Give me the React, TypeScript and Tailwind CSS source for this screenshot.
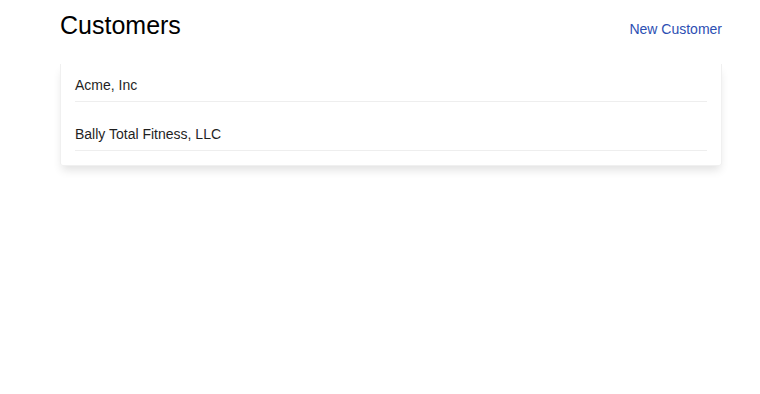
const customers = ['Acme, Inc', 'Bally Total Fitness, LLC'];

export default function App() {
  return (
    <div
      className="min-h-[394px] bg-white pl-[60px] pr-[38px] pt-[10px]"
      style={{ fontFamily: '"Liberation Sans", Arial, sans-serif' }}
    >
      <div className="flex items-baseline justify-between">
        <h1 className="text-[25px] leading-[30px] text-black">Customers</h1>
        <a href="#" className="text-[14px] leading-5 text-[#2c4fb3]">
          New Customer
        </a>
      </div>

      <div className="mt-[24px] rounded-b-[3px] border-x border-b border-[#f0f0f0] px-[14px] pb-[14px] shadow-[0_6px_10px_-2px_rgba(0,0,0,0.12)]">
        {customers.map((name, i) => (
          <div
            key={name}
            className={`border-b border-[#eeeeee] pb-[6px] text-[14px] leading-5 text-[#1f1f1f] ${
              i === 0 ? 'pt-[11px]' : 'pt-[22px]'
            }`}
          >
            {name}
          </div>
        ))}
      </div>
    </div>
  );
}
